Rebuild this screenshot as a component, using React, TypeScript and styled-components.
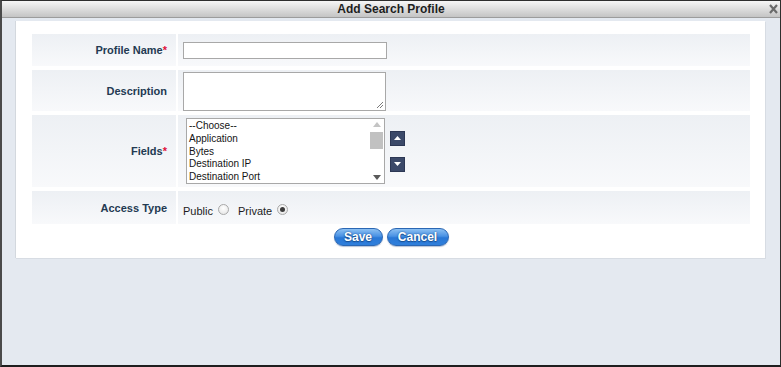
import React from 'react';
import styled, { createGlobalStyle } from 'styled-components';

const GlobalStyle = createGlobalStyle`
  html, body {
    margin: 0;
    padding: 0;
    background: #ffffff;
  }
  body {
    font-family: 'Liberation Sans', Arial, sans-serif;
  }
`;

const Window = styled.div`
  width: 781px;
  height: 367px;
  box-sizing: border-box;
  border: 1px solid #2e2e2e;
  border-left: 2px solid #4a4a4a;
  border-bottom: 2px solid #1e1e1e;
  background: #e4e9f0;
  display: flex;
  flex-direction: column;
`;

const TitleBar = styled.div`
  position: relative;
  height: 16px;
  line-height: 16px;
  background: linear-gradient(#f6f6f6, #d8d8d8 60%, #c4c4c4);
  border-bottom: 1px solid #9c9c9c;
  text-align: center;
  font-size: 12px;
  font-weight: bold;
  color: #1e1e1e;
`;

const CloseButton = styled.span`
  position: absolute;
  right: 2px;
  top: 3px;
  width: 9px;
  height: 10px;
  display: flex;
`;

const Body = styled.div`
  flex: 1;
  padding: 3px 15px 0 13px;
`;

const Panel = styled.div`
  background: #ffffff;
  padding: 13px 15px 12px 16px;
  border-left: 1px solid #d3d8de;
  box-shadow: 1px 1px 0 #d7dce3;
`;

const FormGrid = styled.div`
  display: grid;
  grid-template-columns: 144px 1fr;
  column-gap: 2px;
  row-gap: 4px;
`;

const Cell = styled.div<{ $h: number }>`
  height: ${p => p.$h}px;
  background: linear-gradient(#edf0f4, #f8f9fb);
  display: flex;
  align-items: center;
  box-sizing: border-box;
`;

const LabelCell = styled(Cell)`
  justify-content: flex-end;
  padding-right: 9px;
  font-size: 11px;
  font-weight: bold;
  color: #233a52;
`;

const ValueCell = styled(Cell)`
  padding-left: 5px;
`;

const Required = styled.span`
  color: #e0103a;
`;

const TextInput = styled.div`
  width: 204px;
  height: 17px;
  box-sizing: border-box;
  border: 1px solid #a8a8a8;
  background: #ffffff;
`;

const TextArea = styled.div`
  position: relative;
  width: 203px;
  height: 39px;
  box-sizing: border-box;
  border: 1px solid #a8a8a8;
  background: #ffffff;
  margin-top: 1px;
`;

const Grip = styled.svg`
  position: absolute;
  right: 1px;
  bottom: 1px;
`;

const ListBox = styled.div`
  margin-left: 3px;
  width: 199px;
  height: 66px;
  box-sizing: border-box;
  border: 1px solid #a8a8a8;
  background: #ffffff;
  display: flex;
`;

const ListItems = styled.div`
  flex: 1;
  padding: 1px 0 0 2px;
  overflow: hidden;
`;

const ListItem = styled.div`
  font-size: 10px;
  line-height: 12.8px;
  color: #141414;
  white-space: nowrap;
`;

const ScrollBar = styled.div`
  width: 15px;
  display: flex;
  flex-direction: column;
  align-items: center;
  background: #ffffff;
  padding: 3px 0;
  box-sizing: border-box;
`;

const ScrollThumb = styled.div`
  width: 13px;
  height: 17px;
  margin-top: 5px;
  background: #c1c1c1;
`;

const ScrollSpace = styled.div`
  flex: 1;
`;

const MoveButtons = styled.div`
  margin-left: 5px;
  display: flex;
  flex-direction: column;
  gap: 11px;
`;

const MoveButton = styled.div`
  width: 15px;
  height: 15px;
  box-sizing: border-box;
  background: #3b4969;
  border: 1px solid #2c3754;
  display: flex;
  align-items: center;
  justify-content: center;
`;

const AccessGroup = styled.div`
  display: flex;
  align-items: flex-end;
  padding-top: 7px;
  font-size: 11px;
  line-height: 13px;
  color: #1c1c1c;
`;

const RadioLabel = styled.span<{ $gap: number }>`
  margin-left: ${p => p.$gap}px;
`;

const Radio = styled.span<{ $checked?: boolean }>`
  width: 11px;
  height: 11px;
  margin: 0 0 3px 5px;
  box-sizing: border-box;
  border-radius: 50%;
  border: 1px solid #a9a9a9;
  background: radial-gradient(circle at 50% 35%, #ffffff, #e2e2e2);
  display: flex;
  align-items: center;
  justify-content: center;
  &::after {
    content: '';
    display: ${p => (p.$checked ? 'block' : 'none')};
    width: 5px;
    height: 5px;
    border-radius: 50%;
    background: #3c3c3c;
  }
`;

const ButtonRow = styled.div`
  display: flex;
  justify-content: center;
  gap: 4px;
  margin-top: 4px;
`;

const PillButton = styled.button<{ $w: number }>`
  width: ${p => p.$w}px;
  height: 18px;
  padding: 0;
  border: 1px solid #2b67b4;
  border-radius: 9px;
  background: linear-gradient(#8cc0f2, #4a92e4 45%, #2a78d6 55%, #2f7fdb);
  color: #ffffff;
  font-family: 'Liberation Sans', Arial, sans-serif;
  font-size: 12px;
  font-weight: bold;
  line-height: 16px;
  text-shadow: 0 0 2px #1a4f90, 0 1px 1px #1a4f90;
  box-shadow: 0 1px 1px rgba(40, 80, 140, 0.35);
  cursor: pointer;
`;

const fields = ['--Choose--', 'Application', 'Bytes', 'Destination IP', 'Destination Port'];

export default function App() {
  return (
    <>
      <GlobalStyle />
      <Window>
        <TitleBar>
          Add Search Profile
          <CloseButton>
            <svg width="9" height="10" viewBox="0 0 9 10">
              <path d="M1 1 L8 9 M8 1 L1 9" stroke="#6b6b6b" strokeWidth="2.2" />
            </svg>
          </CloseButton>
        </TitleBar>
        <Body>
          <Panel>
            <FormGrid>
              <LabelCell $h={32}>
                Profile Name<Required>*</Required>
              </LabelCell>
              <ValueCell $h={32}>
                <TextInput />
              </ValueCell>

              <LabelCell $h={41}>Description</LabelCell>
              <ValueCell $h={41}>
                <TextArea>
                  <Grip width="8" height="8" viewBox="0 0 8 8">
                    <path d="M7 1 L1 7 M7 4 L4 7" stroke="#7a7a7a" strokeWidth="1" />
                  </Grip>
                </TextArea>
              </ValueCell>

              <LabelCell $h={72}>
                Fields<Required>*</Required>
              </LabelCell>
              <ValueCell $h={72}>
                <ListBox>
                  <ListItems>
                    {fields.map(f => (
                      <ListItem key={f}>{f}</ListItem>
                    ))}
                  </ListItems>
                  <ScrollBar>
                    <svg width="8" height="5" viewBox="0 0 8 5">
                      <path d="M0 5 L4 0 L8 5 Z" fill="#c4c4c4" />
                    </svg>
                    <ScrollThumb />
                    <ScrollSpace />
                    <svg width="8" height="5" viewBox="0 0 8 5">
                      <path d="M0 0 L8 0 L4 5 Z" fill="#5a5a5a" />
                    </svg>
                  </ScrollBar>
                </ListBox>
                <MoveButtons>
                  <MoveButton>
                    <svg width="7" height="4" viewBox="0 0 7 4">
                      <path d="M0 4 L3.5 0 L7 4 Z" fill="#ffffff" />
                    </svg>
                  </MoveButton>
                  <MoveButton>
                    <svg width="7" height="4" viewBox="0 0 7 4">
                      <path d="M0 0 L7 0 L3.5 4 Z" fill="#ffffff" />
                    </svg>
                  </MoveButton>
                </MoveButtons>
              </ValueCell>

              <LabelCell $h={33}>Access Type</LabelCell>
              <ValueCell $h={33}>
                <AccessGroup>
                  <RadioLabel $gap={0}>Public</RadioLabel>
                  <Radio />
                  <RadioLabel $gap={9}>Private</RadioLabel>
                  <Radio $checked />
                </AccessGroup>
              </ValueCell>
            </FormGrid>
            <ButtonRow>
              <PillButton type="button" $w={49}>
                Save
              </PillButton>
              <PillButton type="button" $w={62}>
                Cancel
              </PillButton>
            </ButtonRow>
          </Panel>
        </Body>
      </Window>
    </>
  );
}
